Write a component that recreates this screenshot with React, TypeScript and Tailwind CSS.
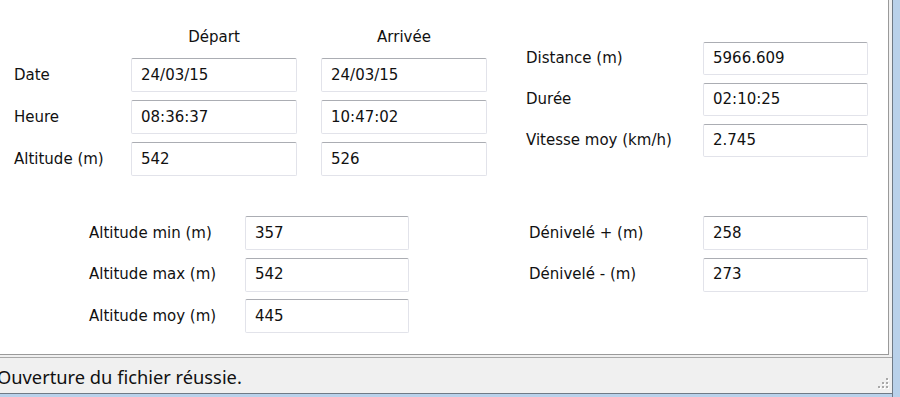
import type { ReactNode } from "react";

const field =
  "flex items-center rounded-[2px] border border-[#e2e3ea] border-t-[#abadb3] bg-white pl-[9px] text-[#111]";

function Label({ children }: { children: ReactNode }) {
  return <div className="flex items-center whitespace-nowrap text-[#111]">{children}</div>;
}

function Field({ value, h = "h-[34px]" }: { value: string; h?: string }) {
  return <div className={`${field} ${h}`}>{value}</div>;
}

function Grip() {
  const dots = [
    [10, 0],
    [10, 4],
    [6, 4],
    [10, 8],
    [6, 8],
    [2, 8],
  ];
  return (
    <svg width="14" height="12" viewBox="0 0 14 12" className="absolute bottom-[3px] right-[2px]">
      {dots.map(([x, y]) => (
        <g key={`${x}-${y}`}>
          <rect x={x + 1} y={y + 1} width="2" height="2" fill="#ffffff" />
          <rect x={x} y={y} width="2" height="2" fill="#a9a9a9" />
        </g>
      ))}
    </svg>
  );
}

export default function App() {
  return (
    <div
      className="flex h-[397px] w-[900px] overflow-hidden bg-[#f0f0f0] text-[15px]"
      style={{ fontFamily: '"DejaVu Sans", Verdana, sans-serif' }}
    >
      <div className="flex w-[892px] flex-col">
        {/* main panel */}
        <div className="h-[355px] w-[889px] border-b border-r border-[#9a9a9a] bg-white">
          <div className="flex items-start">
            <div className="ml-[14px] mt-[24px] grid grid-cols-[93px_166px_166px] gap-x-[24px] gap-y-[8px]">
              <div className="h-[26px]" />
              <div className="flex h-[26px] items-center justify-center text-[#111]">Départ</div>
              <div className="flex h-[26px] items-center justify-center text-[#111]">Arrivée</div>

              <Label>Date</Label>
              <Field value="24/03/15" />
              <Field value="24/03/15" />

              <Label>Heure</Label>
              <Field value="08:36:37" />
              <Field value="10:47:02" />

              <Label>Altitude (m)</Label>
              <Field value="542" />
              <Field value="526" />
            </div>

            <div className="ml-[39px] mt-[42px] grid grid-cols-[177px_165px] gap-y-[8px]">
              <Label>Distance (m)</Label>
              <Field value="5966.609" h="h-[33px]" />
              <Label>Durée</Label>
              <Field value="02:10:25" h="h-[33px]" />
              <Label>Vitesse moy (km/h)</Label>
              <Field value="2.745" h="h-[33px]" />
            </div>
          </div>

          <div className="mt-[40px] flex items-start">
            <div className="ml-[89px] grid grid-cols-[156px_164px] gap-y-[7.5px]">
              <Label>Altitude min (m)</Label>
              <Field value="357" />
              <Label>Altitude max (m)</Label>
              <Field value="542" />
              <Label>Altitude moy (m)</Label>
              <Field value="445" />
            </div>

            <div className="ml-[120px] grid grid-cols-[174px_165px] gap-y-[7.5px]">
              <Label>Dénivelé + (m)</Label>
              <Field value="258" />
              <Label>Dénivelé - (m)</Label>
              <Field value="273" />
            </div>
          </div>
        </div>

        {/* status bar */}
        <div className="relative mt-[2px] flex h-[37px] items-center border-t border-b border-[#a8a8a8] border-b-[#6f7a86] bg-[#f0f0f0]">
          <span
            className="ml-[-3px] mt-[3px] text-[18.3px] text-[#111]"
            style={{ fontFamily: '"Noto Sans", "Open Sans", sans-serif' }}
          >
            Ouverture du fichier réussie.
          </span>
          <Grip />
        </div>
        <div className="flex-1 bg-[#b9d1ea]" />
      </div>

      {/* window frame */}
      <div className="w-px bg-[#6f7a86]" />
      <div className="flex-1 bg-[#b9d1ea]" />
    </div>
  );
}
